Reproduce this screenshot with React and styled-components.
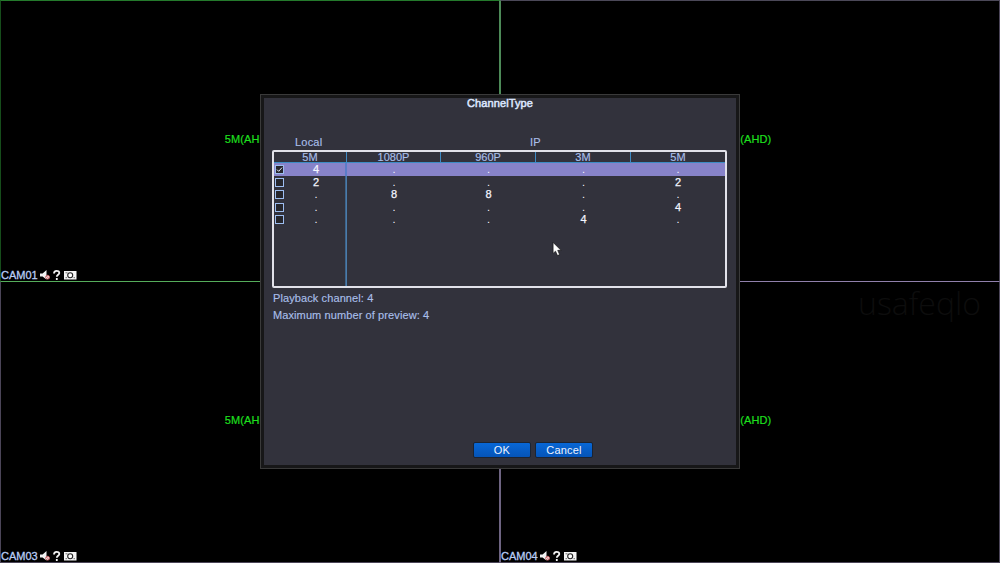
import React from "react";
import styled, { createGlobalStyle, css } from "styled-components";

const GlobalStyle = createGlobalStyle`
  * { box-sizing: border-box; }
  body {
    margin: 0;
    background: #000;
    font-family: "Liberation Sans", Arial, sans-serif;
    font-size: 11px;
    overflow: hidden;
  }
`;

const Screen = styled.main`
  position: relative;
  width: 1000px;
  height: 563px;
  background: #000;
  overflow: hidden;
`;

const CameraGrid = styled.div`
  display: grid;
  width: 1000px;
  height: 563px;
  grid-template-columns: 500px 500px;
  grid-template-rows: 282px 281px;
`;

const edges = {
  tl: css`border-color: #247a2c #4d8a58 #55ad5b #164d1b;`,
  tr: css`border-color: #4b4858 #4b4558 #9080ac #4d8a58;`,
  bl: css`border-color: #000 #6e6482 #4b4558 #4b4558; border-top-width: 0;`,
  br: css`border-color: #000 #4b4558 #4b4558 #6e6482; border-top-width: 0;`,
};

const Camera = styled.section`
  display: flex;
  flex-direction: column;
  justify-content: flex-end;
  border: 1px solid;
  ${({ $edge }) => edges[$edge]}
`;

const Signal = styled.div`
  width: 494px;
  margin-bottom: ${({ $gap }) => $gap}px;
  text-align: center;
  line-height: 14px;
  letter-spacing: 0.1px;
  color: #1fe01f;
  -webkit-text-stroke: 0.15px #1fe01f;
`;

const CameraBar = styled.div`
  display: flex;
  align-items: center;
  height: 13px;
  color: #b9cdf5;
  -webkit-text-stroke: 0.3px #b9cdf5;

  span { width: 38px; white-space: nowrap; }
  svg { display: block; flex: none; }
`;

const Watermark = styled.div`
  position: absolute;
  left: 858px;
  top: 283px;
  font: 32px/40px "Open Sans", "Noto Sans", sans-serif;
  font-weight: 300;
  color: #0d0d0d;
`;

const Dialog = styled.div`
  position: absolute;
  left: 260px;
  top: 94px;
  width: 480px;
  height: 375px;
  border: 1px solid #3a3a3a;
  background: #171718;
  padding: 3px;
`;

const DialogBody = styled.div`
  display: flex;
  flex-direction: column;
  height: 367px;
  background: #32323c;
  padding: 0 9px 0 8px;
`;

const Title = styled.h1`
  margin: 0;
  height: 38px;
  font-size: 11px;
  line-height: 11px;
  font-weight: 400;
  letter-spacing: 0.12px;
  padding-left: 1px;
  text-align: center;
  color: #dce7ff;
  -webkit-text-stroke: 0.5px #dce7ff;
`;

const Groups = styled.div`
  display: grid;
  grid-template-columns: 73px 1fr;
  height: 14px;
  line-height: 13px;
  letter-spacing: 0.2px;
  color: #a9bfe9;
  -webkit-text-stroke: 0.15px #a9bfe9;
`;

const Group = styled.div`
  padding-left: ${({ $indent }) => $indent}px;
`;

const Table = styled.div`
  display: flex;
  flex-direction: column;
  height: 138px;
  border: 2px solid #e2e2ea;
  border-radius: 2px;
`;

const columns = css`
  display: grid;
  grid-template-columns: 73px 94px 95px 95px 1fr;
`;

const Header = styled.div`
  ${columns}
  height: 11px;
  border-bottom: 1px solid #3c8cc4;
  color: #a9bfe9;
  -webkit-text-stroke: 0.15px #a9bfe9;
`;

const HeaderCell = styled.div`
  height: 10px;
  line-height: 11px;
  text-align: center;
  border-right: 1px solid #3f8ac4;
  &:last-child { border-right: 0; }
`;

const Rows = styled.div`
  flex: 1;
  background: linear-gradient(90deg, #3f648a 1px, #4a7cab 1px) 71px 0 / 2px 100% no-repeat;
`;

const Row = styled.div`
  ${columns}
  height: 12.5px;
  line-height: 13px;
  color: #f4f5ff;
  background: ${({ $selected }) =>
    $selected
      ? "linear-gradient(#5a7cc8, #5a7cc8) 71px 0 / 2px 100% no-repeat, #8783c9"
      : "none"};
`;

const Cell = styled.div`
  text-align: center;
  font-size: 11px;
  -webkit-text-stroke: ${({ $value }) => ($value ? "0.25px #f4f5ff" : "0")};
`;

const FirstCell = styled.div`
  display: grid;
  grid-template-columns: 12px 60px;
  align-items: center;
`;

const Check = styled.span`
  display: block;
  width: 9px;
  height: 9px;
  margin-left: 1px;
  border: 1px solid #9dbdf0;
  background: #26262c;
  svg { display: block; }
`;

const Info = styled.div`
  padding: 2px 0 0 1px;
  line-height: 17px;
  letter-spacing: 0.1px;
  color: #a9bfe9;
  -webkit-text-stroke: 0.15px #a9bfe9;
`;

const Actions = styled.div`
  display: flex;
  gap: 4px;
  margin-top: auto;
  margin-bottom: 7px;
  padding-left: 201px;
`;

const Button = styled.button`
  width: 58px;
  height: 16px;
  padding: 0;
  border: 1px solid #1b2433;
  border-radius: 2px;
  background: linear-gradient(#0867d6, #0554b8);
  color: #eef4ff;
  font: 11px/13px "Liberation Sans", Arial, sans-serif;
  letter-spacing: 0.2px;
`;

const Cursor = styled.svg`
  position: absolute;
  left: 552px;
  top: 241px;
`;

function StatusIcons() {
  return (
    <svg width="38" height="12" viewBox="0 0 38 12">
      <path d="M1 4.5h2.6L7.5 1v9.6L3.6 7.5H1z" fill="#f2f2f2" />
      <circle cx="8.6" cy="8.2" r="1.9" fill="#fff" stroke="#c4585c" />
      <path d="M7.4 7l2.5 2.5" stroke="#c4585c" />
      <path d="M15 4.5c0-3.6 5.3-3.4 5.3-.6 0 1.8-2.5 1.9-2.5 3.8M17.8 9v2" fill="none" stroke="#f2f2f2" strokeWidth="1.8" />
      <rect x="25" y="2" width="12.5" height="8.5" fill="#f4f4f4" />
      <circle cx="31.2" cy="6.2" r="2.5" fill="#fff" stroke="#222" strokeWidth="1.1" />
      <path d="M26.5 3.8h2M26.5 8.7h1.5M34.5 8.7H36" stroke="#333" strokeWidth=".7" />
    </svg>
  );
}

function CameraView({ edge, name, gap }) {
  return (
    <Camera $edge={edge}>
      <Signal $gap={gap}>5M(AHD)</Signal>
      {name && (
        <CameraBar>
          <span>{name}</span>
          <StatusIcons />
        </CameraBar>
      )}
    </Camera>
  );
}

const rows = [
  ["4", ".", ".", ".", "."],
  ["2", ".", ".", ".", "2"],
  [".", "8", "8", ".", "."],
  [".", ".", ".", ".", "4"],
  [".", ".", ".", "4", "."],
];

export default function App() {
  return (
    <>
      <GlobalStyle />
      <Screen>
        <CameraGrid>
          <CameraView edge="tl" name="CAM01" gap={122} />
          <CameraView edge="tr" gap={135} />
          <CameraView edge="bl" name="CAM03" gap={122} />
          <CameraView edge="br" name="CAM04" gap={122} />
        </CameraGrid>
        <Watermark>usafeqlo</Watermark>
        <Dialog>
          <DialogBody>
            <Title>ChannelType</Title>
            <Groups>
              <Group $indent={23}>Local</Group>
              <Group $indent={185}>IP</Group>
            </Groups>
            <Table>
              <Header>
                {["5M", "1080P", "960P", "3M", "5M"].map((label, i) => (
                  <HeaderCell key={i}>{label}</HeaderCell>
                ))}
              </Header>
              <Rows>
                {rows.map((values, r) => (
                  <Row key={r} $selected={r === 0}>
                    <FirstCell>
                      <Check>
                        {r === 0 && (
                          <svg width="7" height="7" viewBox="0 0 7 7">
                            <path d="M1 3.6l1.7 1.7L6 1.6" fill="none" stroke="#e8eefc" />
                          </svg>
                        )}
                      </Check>
                      <Cell $value={values[0] !== "."}>{values[0]}</Cell>
                    </FirstCell>
                    {values.slice(1).map((value, c) => (
                      <Cell key={c} $value={value !== "."}>{value}</Cell>
                    ))}
                  </Row>
                ))}
              </Rows>
            </Table>
            <Info>
              <div>Playback channel: 4</div>
              <div>Maximum number of preview: 4</div>
            </Info>
            <Actions>
              <Button>OK</Button>
              <Button>Cancel</Button>
            </Actions>
          </DialogBody>
        </Dialog>
        <Cursor width="11" height="16" viewBox="0 0 10 14">
          <path d="M1 1v10l2.2-2 1.8 4 1.9-.9L5.2 8.2h3z" fill="#fff" stroke="#111" strokeWidth=".6" />
        </Cursor>
      </Screen>
    </>
  );
}
